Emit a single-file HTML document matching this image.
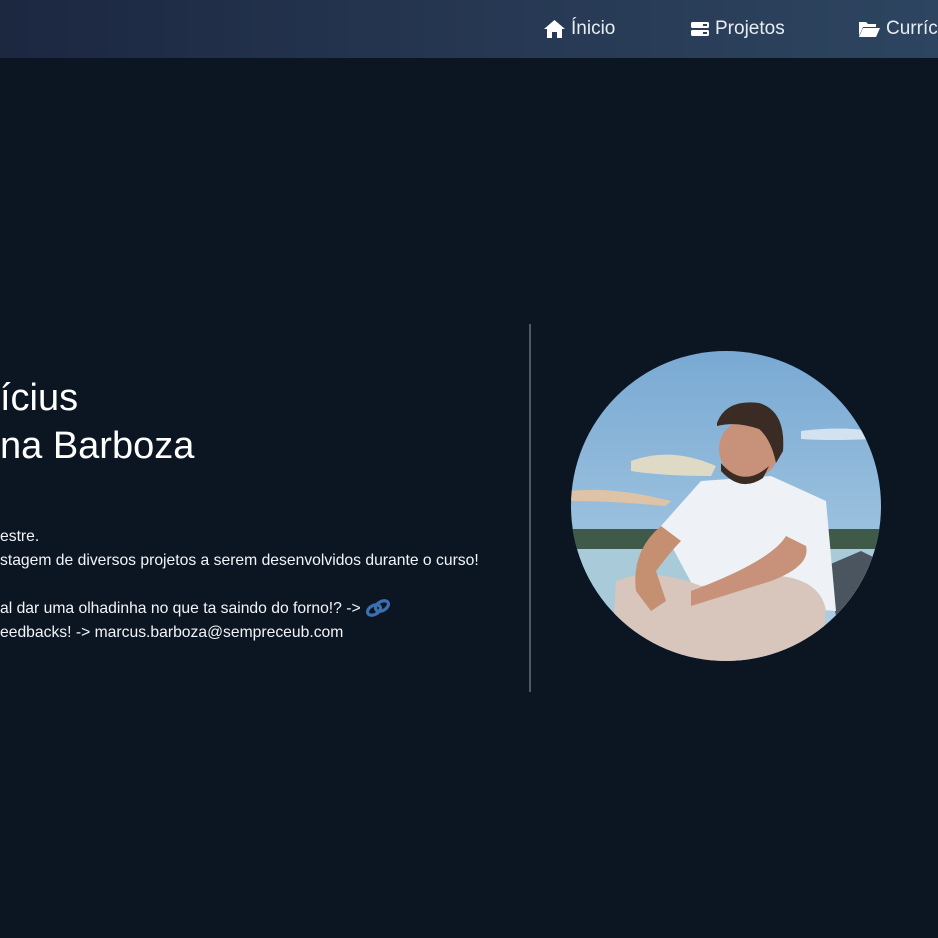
<!DOCTYPE html>
<html><head><meta charset="utf-8"><style>
*{margin:0;padding:0;box-sizing:border-box}
body{width:938px;height:938px;overflow:hidden;background:#0c1623;font-family:"Liberation Sans","DejaVu Sans",sans-serif;color:#fff;position:relative}
.nav{position:absolute;left:0;top:0;width:938px;height:58px;background:linear-gradient(90deg,#1c2740 0%,#263752 50%,#2d4560 100%)}
.nav a{position:absolute;top:18px;font-size:19px;color:#e8edf3;text-decoration:none;white-space:nowrap;display:flex;align-items:center;gap:5px}
.t{position:absolute;white-space:nowrap}
.big{font-size:38px;color:#fff}
.sm{font-size:15.7px;color:#f2f4f7}
.div{position:absolute;left:529px;top:324px;width:2px;height:368px;background:#4f5867}
</style></head><body>
<div class="nav">
<a style="left:543px"><svg width="23" height="20" viewBox="0 0 23 20"><path d="M11.5 1 L1 10 L4 10 L4 19 L9 19 L9 13 L14 13 L14 19 L19 19 L19 10 L22 10 Z" fill="#fff"/></svg>Ínicio</a>
<a style="left:690px"><svg width="20" height="18" viewBox="0 0 20 18"><rect x="1" y="2" width="18" height="6" rx="1.5" fill="#fff"/><rect x="1" y="10" width="18" height="6" rx="1.5" fill="#fff"/><rect x="13" y="4" width="4" height="2" fill="#2a3f5a"/><rect x="13" y="12" width="4" height="2" fill="#2a3f5a"/></svg>Projetos</a>
<a style="left:858px"><svg width="23" height="18" viewBox="0 0 23 18"><path d="M1 2 H8 L10 4 H18 V7 H5 L1 16 Z" fill="#fff"/><path d="M5 8 H22 L18 17 H1 Z" fill="#fff"/></svg>Currículo</a>
</div>
<div class="t big" style="left:0;top:377px">ícius</div>
<div class="t big" style="left:0;top:425px">na Barboza</div>
<div class="t sm" style="left:0;top:528px">estre.</div>
<div class="t sm" style="left:0;top:552px">stagem de diversos projetos a serem desenvolvidos durante o curso!</div>
<div class="t sm" style="left:0;top:599px">al dar uma olhadinha no que ta saindo do forno!? -&gt; <svg width="26" height="18" viewBox="0 0 26 18" style="vertical-align:-4px"><g fill="none" stroke="#3b6fb0" stroke-width="3.2"><ellipse cx="9" cy="11" rx="7" ry="4.5" transform="rotate(-30 9 11)"/><ellipse cx="17" cy="7" rx="7" ry="4.5" transform="rotate(-30 17 7)"/></g></svg></div>
<div class="t sm" style="left:0;top:624px">eedbacks! -&gt; marcus.barboza@sempreceub.com</div>
<div class="div"></div>
<svg style="position:absolute;left:571px;top:351px" width="310" height="310" viewBox="0 0 310 310">
<defs><clipPath id="c"><circle cx="155" cy="155" r="155"/></clipPath>
<linearGradient id="s" x1="0" y1="0" x2="0" y2="1"><stop offset="0" stop-color="#79a9d3"/><stop offset="1" stop-color="#b3d2e6"/></linearGradient></defs>
<g clip-path="url(#c)">
<rect width="310" height="310" fill="url(#s)"/>
<path d="M0 140 Q40 135 100 150 L95 155 Q40 150 0 150Z" fill="#f1c49a" opacity=".8"/>
<path d="M60 110 Q100 95 145 115 L140 125 Q90 125 60 120Z" fill="#f2e2bf" opacity=".8"/>
<path d="M230 80 Q270 75 300 80 L300 88 Q260 90 230 88Z" fill="#e6eef5" opacity=".8"/>
<rect x="0" y="178" width="310" height="22" fill="#3f5a48"/>
<rect x="0" y="198" width="310" height="60" fill="#a9cad9"/>
<path d="M255 215 L290 200 L310 210 L310 260 L265 265Z" fill="#4a5560"/>
<path d="M90 175 L130 130 L200 125 L255 150 L265 260 L130 250 Z" fill="#eef2f6"/>
<path d="M40 310 L45 230 Q80 215 130 235 L210 225 Q250 230 255 260 L250 310Z" fill="#d8c5bb"/>
<path d="M90 175 Q60 200 65 240 L80 260 L95 250 L85 220 Q100 200 110 190Z" fill="#c58f72"/>
<path d="M120 255 L200 230 Q240 215 235 195 L215 185 Q200 210 120 240Z" fill="#c8917a"/>
<circle cx="178" cy="98" r="30" fill="#c8927a"/>
<path d="M146 72 Q155 48 188 52 Q215 60 212 100 L205 112 Q200 88 188 78 Q165 70 146 75Z" fill="#3a2b24"/>
<path d="M150 112 Q172 138 198 115 L192 127 Q170 142 150 120Z" fill="#3a2b24"/>
</g></svg>
</body></html>
